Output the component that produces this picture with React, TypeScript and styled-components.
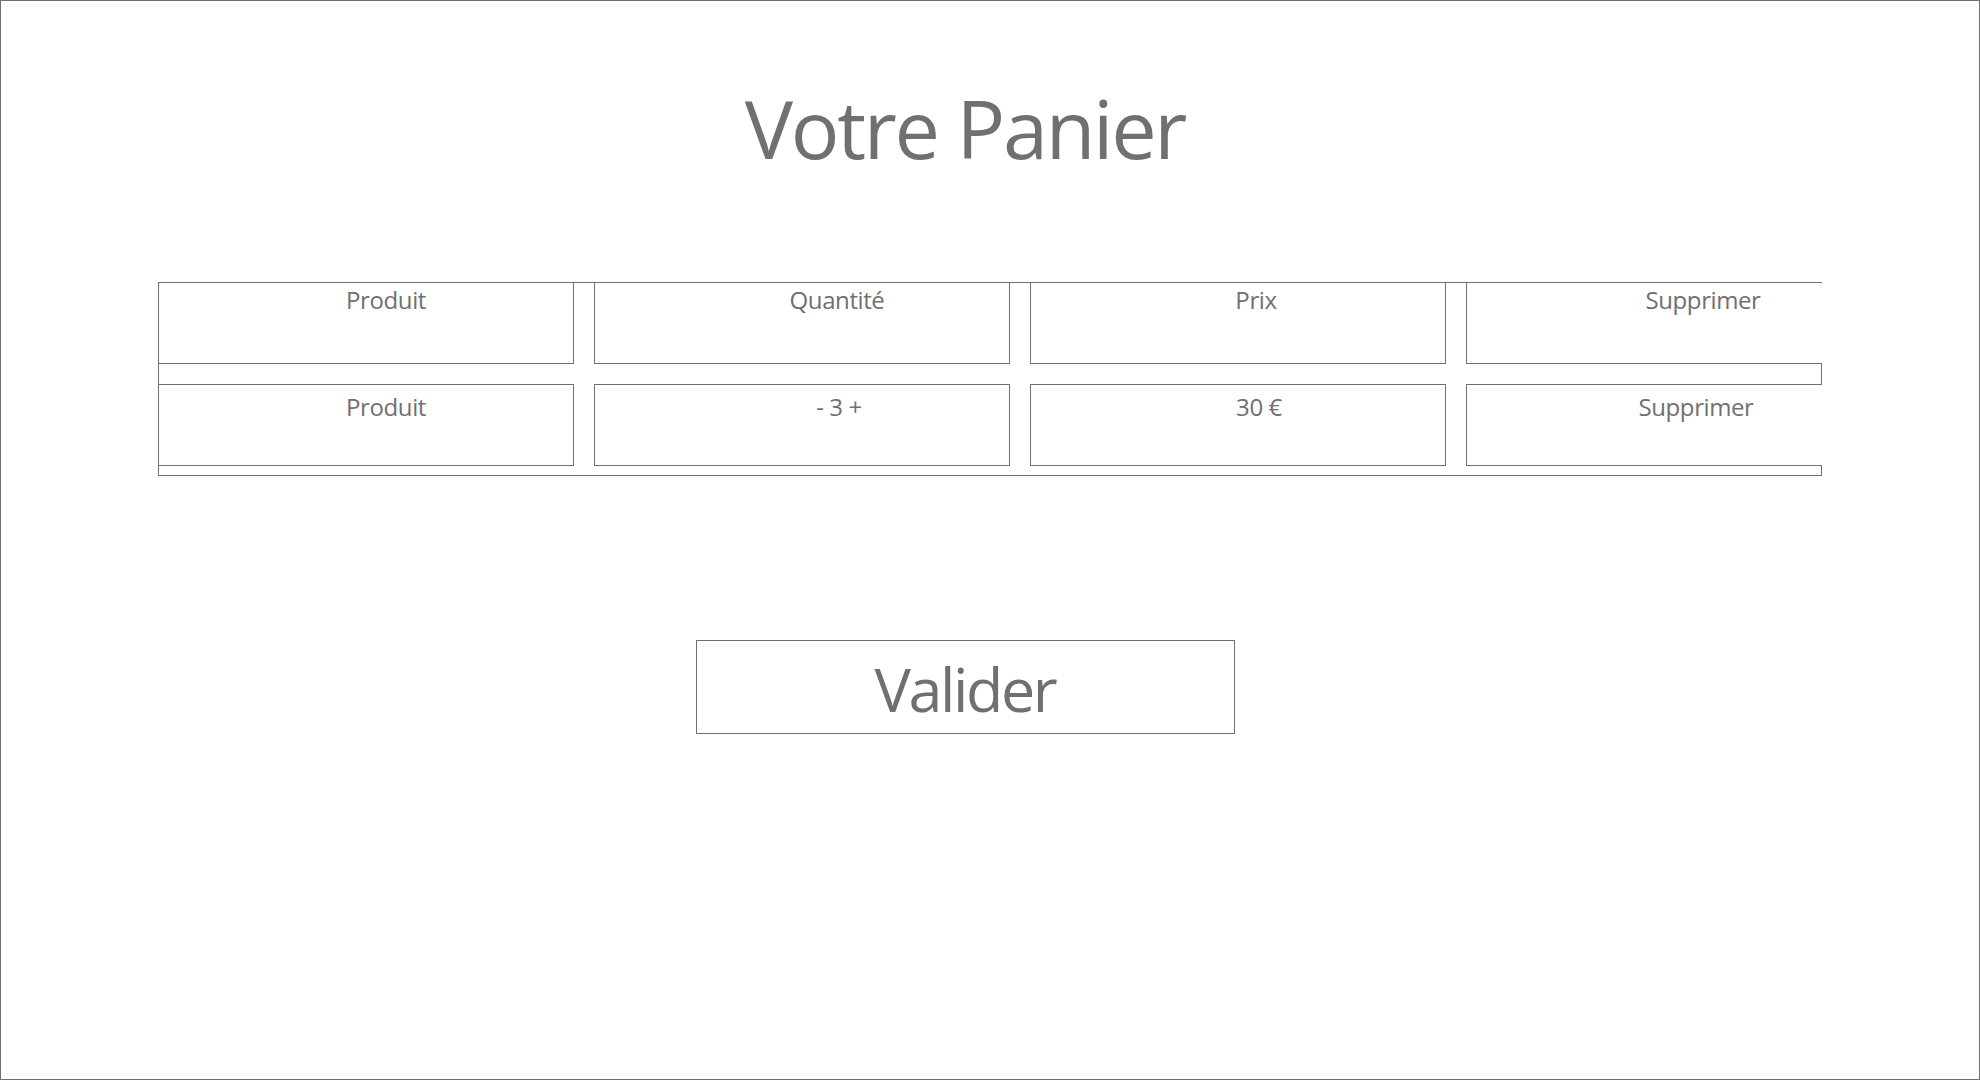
import React from 'react';
import styled, { createGlobalStyle } from 'styled-components';

const GlobalStyle = createGlobalStyle`
  html, body {
    margin: 0;
    padding: 0;
    background: #ffffff;
  }
  body {
    font-family: "Open Sans", "Noto Sans", sans-serif;
    color: #707070;
  }
`;

const Page = styled.div`
  box-sizing: border-box;
  width: 1980px;
  height: 1080px;
  border: 1px solid #707070;
  display: flex;
  flex-direction: column;
  align-items: center;
  padding-top: 71px;
`;

const Title = styled.h1`
  margin: 0 50px 0 0;
  font-size: 81px;
  font-weight: 400;
  letter-spacing: -2.3px;
  line-height: normal;
  color: #707070;
`;

const Table = styled.div`
  position: relative;
  box-sizing: border-box;
  width: 1664px;
  margin-top: 99px;
  padding-bottom: 10px;
  overflow: hidden;
  display: flex;
  flex-direction: column;
  gap: 20px;

  &::before {
    content: '';
    position: absolute;
    inset: 0;
    border: 1px solid #707070;
  }
`;

const Row = styled.div`
  position: relative;
  z-index: 1;
  display: flex;
  gap: 20px;
`;

const Cell = styled.div<{ $shift: number; $top: number }>`
  box-sizing: border-box;
  flex: 0 0 416px;
  height: 82px;
  border: 1px solid #707070;
  background: #ffffff;
  padding-top: ${p => p.$top}px;
  padding-left: ${p => p.$shift * 2}px;
  text-align: center;
  font-size: 24px;
  letter-spacing: -0.4px;
  line-height: normal;
  color: #707070;
  white-space: nowrap;
`;

const ValidateButton = styled.button`
  box-sizing: border-box;
  width: 539px;
  height: 94px;
  margin: 164px 50px 0 0;
  padding: 3px 0 0;
  border: 1px solid #707070;
  background: #ffffff;
  display: flex;
  align-items: center;
  justify-content: center;
  font-family: "Open Sans", "Noto Sans", sans-serif;
  font-size: 61px;
  letter-spacing: -2.4px;
  color: #707070;
  cursor: pointer;
`;

const header = [
  { label: 'Produit', shift: 20 },
  { label: 'Quantité', shift: 35 },
  { label: 'Prix', shift: 18 },
  { label: 'Supprimer', shift: 29 },
];

const items = [
  { label: 'Produit', shift: 20 },
  { label: '- 3 +', shift: 37 },
  { label: '30 €', shift: 21 },
  { label: 'Supprimer', shift: 22 },
];

export default function App() {
  return (
    <>
      <GlobalStyle />
      <Page>
        <Title>Votre Panier</Title>
        <Table>
          <Row>
            {header.map(c => (
              <Cell key={c.label} $shift={c.shift} $top={0}>{c.label}</Cell>
            ))}
          </Row>
          <Row>
            {items.map(c => (
              <Cell key={c.label} $shift={c.shift} $top={5}>{c.label}</Cell>
            ))}
          </Row>
        </Table>
        <ValidateButton>Valider</ValidateButton>
      </Page>
    </>
  );
}
